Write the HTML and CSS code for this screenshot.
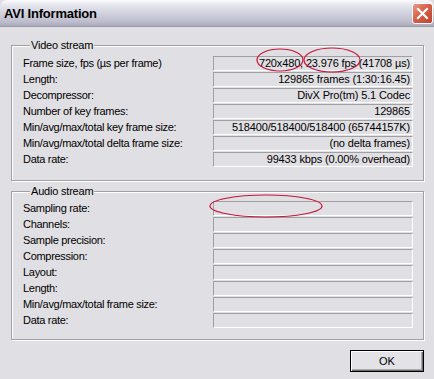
FILE: index.html
```html
<!DOCTYPE html>
<html lang="en">
<head>
  <meta charset="UTF-8">
  <title>AVI Information</title>
  <link rel="stylesheet" href="styles.css">
</head>
<body>

  <div class="window">
    <div class="titlebar">
      <span class="title">AVI Information</span>
      <span class="close">
        <svg width="13" height="13" viewBox="0 0 13 13"><path d="M2 2 L11 11 M11 2 L2 11" stroke="#fff" stroke-width="2.2" stroke-linecap="square"/></svg>
      </span>
    </div>

    <div class="content">
      <fieldset class="group video">
        <legend>Video stream</legend>
        <div class="rows">
          <div class="label">Frame size, fps (µs per frame)</div><div class="value">720x480, 23.976 fps (41708 µs)</div>
          <div class="label">Length:</div><div class="value">129865 frames (1:30:16.45)</div>
          <div class="label">Decompressor:</div><div class="value">DivX Pro(tm) 5.1 Codec</div>
          <div class="label">Number of key frames:</div><div class="value">129865</div>
          <div class="label">Min/avg/max/total key frame size:</div><div class="value">518400/518400/518400 (65744157K)</div>
          <div class="label">Min/avg/max/total delta frame size:</div><div class="value">(no delta frames)</div>
          <div class="label">Data rate:</div><div class="value">99433 kbps (0.00% overhead)</div>
        </div>
      </fieldset>

      <fieldset class="group audio">
        <legend>Audio stream</legend>
        <div class="rows">
          <div class="label">Sampling rate:</div><div class="value"></div>
          <div class="label">Channels:</div><div class="value"></div>
          <div class="label">Sample precision:</div><div class="value"></div>
          <div class="label">Compression:</div><div class="value"></div>
          <div class="label">Layout:</div><div class="value"></div>
          <div class="label">Length:</div><div class="value"></div>
          <div class="label">Min/avg/max/total frame size:</div><div class="value"></div>
          <div class="label">Data rate:</div><div class="value"></div>
        </div>
      </fieldset>

      <div class="actions">
        <button class="ok-btn">OK</button>
      </div>
    </div>

    <!-- red marks drawn over the screenshot -->
    <svg class="marks" width="434" height="379">
      <ellipse cx="280" cy="60" rx="23" ry="11" />
      <ellipse cx="332" cy="60" rx="28" ry="12" />
      <ellipse cx="266" cy="206" rx="56" ry="11" />
    </svg>
  </div>

</body>
</html>
```

FILE: styles.css
```css
body, html {
  margin: 0;
  padding: 0;
  background-color: #e0dfe3;
  font-family: "Liberation Sans", Arial, sans-serif;
  font-size: 11px;
  color: black;
}

.window {
  position: relative;
  width: 434px;
  height: 379px;
  overflow: hidden;
  background-color: #e0dfe3;
}

.titlebar {
  height: 27px;
  box-sizing: border-box;
  display: flex;
  align-items: center;
  justify-content: space-between;
  padding: 0 1px 0 4px;
  border-radius: 7px 7px 0 0;
  border-bottom: 1px solid #9a9aa8;
  background: linear-gradient(#fbfbfd 0%, #e6e6ee 20%, #cfcfdc 55%, #bcbccc 85%, #a9a9ba 100%);
}

.title {
  font-size: 13px;
  font-weight: bold;
  color: #000;
  padding-top: 1px;
  letter-spacing: -0.2px;
}

.close {
  width: 21px;
  height: 21px;
  box-sizing: border-box;
  display: flex;
  justify-content: center;
  align-items: center;
  border: 1px solid #fff;
  border-radius: 3px;
  background: linear-gradient(135deg, #e89a86 0%, #d8604a 45%, #c0402c 100%);
}

.content {
  padding: 12px 10px 0 11px;
}

.group {
  margin: 0;
  padding: 3.5px 10px 13px 11px;
  border: 1px solid #a0a0a0;
  box-shadow: 1px 1px 0 #fff, inset 1px 1px 0 #fff;
}

.group legend {
  padding: 0 1px;
  margin-left: 7px;
  line-height: 13px;
  letter-spacing: -0.2px;
  background-color: #e0dfe3;
}

.audio {
  margin-top: 4px;
  padding-bottom: 11px;
}

.rows {
  display: grid;
  grid-template-columns: 190px 1fr;
  row-gap: 1px;
}

.label {
  height: 15px;
  line-height: 15px;
  white-space: nowrap;
  letter-spacing: -0.3px;
}

.value {
  height: 15px;
  box-sizing: border-box;
  line-height: 13px;
  text-align: right;
  padding-right: 2px;
  white-space: nowrap;
  letter-spacing: -0.15px;
  border-top: 1px solid #a0a0a0;
  border-left: 1px solid #a0a0a0;
  border-bottom: 1px solid #fff;
  border-right: 1px solid #fff;
}

.actions {
  display: flex;
  justify-content: flex-end;
  margin-top: 10px;
}

.ok-btn {
  width: 74px;
  height: 22px;
  font-family: "Liberation Sans", Arial, sans-serif;
  font-size: 11px;
  color: #000;
  background-color: #e3e2e6;
  border: 1px solid #000;
  box-shadow: inset 1px 1px 0 #fff, inset -1px -1px 0 #6e6e6e, inset -2px -2px 0 #a8a8a8;
  padding: 0;
}

.marks {
  position: absolute;
  left: 0;
  top: 0;
  pointer-events: none;
}

.marks ellipse {
  fill: none;
  stroke: #c8143a;
  stroke-width: 1.2;
}
```
